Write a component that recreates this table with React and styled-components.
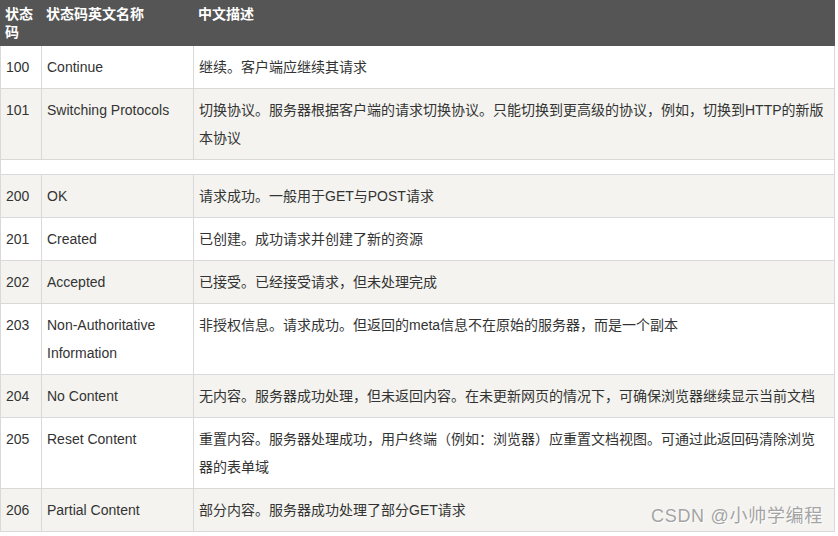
import React from "react";
import styled, { createGlobalStyle } from "styled-components";

const Global = createGlobalStyle`
  html, body { margin: 0; padding: 0; background: #fff; }
  body { font-family: "Liberation Sans", "Noto Sans CJK SC", sans-serif; }
`;

const Page = styled.div`
  position: relative;
  width: 834px;
`;

const Table = styled.table`
  width: 834px;
  table-layout: fixed;
  border-collapse: collapse;
  border-spacing: 0;
  font-family: "Liberation Sans", "Noto Sans CJK SC", sans-serif;
  font-size: 14px;
  color: #333;
`;

const Col = styled.col`
  width: ${(p) => p.$w}px;
`;

const HeadCell = styled.th`
  background: #555555;
  color: #fff;
  font-weight: bold;
  font-size: 14px;
  line-height: 18px;
  text-align: left;
  vertical-align: top;
  padding: 4px 4px 4px 4px;
  border: 1px solid #555555;
`;

const Row = styled.tr`
  background: #fff;
  &:nth-child(even) {
    background: #f4f3ef;
  }
`;

const Cell = styled.td`
  border: 1px solid #d9d9d9;
  padding: 7px ${(p) => (p.$wide ? 8 : 5)}px 7px 5px;
  line-height: 28px;
  vertical-align: top;
  word-wrap: break-word;
`;

const Spacer = styled.td`
  border: 1px solid #d9d9d9;
  padding: 7px 0;
  line-height: 0;
  height: 0;
`;

const Watermark = styled.div`
  position: absolute;
  right: 11px;
  top: 507px;
  font-family: "Liberation Sans", "Noto Sans CJK SC", sans-serif;
  font-size: 18px;
  line-height: 18px;
  letter-spacing: 0.7px;
  color: #a3a3a3;
  white-space: nowrap;
  text-shadow: 0 0 1px #fff, 1px 1px 0 rgba(255, 255, 255, 0.8);
`;

const groups = [
  [
    ["100", "Continue", "继续。客户端应继续其请求"],
    [
      "101",
      "Switching Protocols",
      "切换协议。服务器根据客户端的请求切换协议。只能切换到更高级的协议，例如，切换到HTTP的新版本协议",
    ],
  ],
  [
    ["200", "OK", "请求成功。一般用于GET与POST请求"],
    ["201", "Created", "已创建。成功请求并创建了新的资源"],
    ["202", "Accepted", "已接受。已经接受请求，但未处理完成"],
    [
      "203",
      "Non-Authoritative Information",
      "非授权信息。请求成功。但返回的meta信息不在原始的服务器，而是一个副本",
    ],
    [
      "204",
      "No Content",
      "无内容。服务器成功处理，但未返回内容。在未更新网页的情况下，可确保浏览器继续显示当前文档",
    ],
    [
      "205",
      "Reset Content",
      "重置内容。服务器处理成功，用户终端（例如：浏览器）应重置文档视图。可通过此返回码清除浏览器的表单域",
    ],
    ["206", "Partial Content", "部分内容。服务器成功处理了部分GET请求"],
  ],
];

export default function App() {
  return (
    <>
      <Global />
      <Page>
        <Table>
          <colgroup>
            <Col $w={41} />
            <Col $w={152} />
            <Col $w={641} />
          </colgroup>
          <thead>
            <tr>
              <HeadCell>状态码</HeadCell>
              <HeadCell>状态码英文名称</HeadCell>
              <HeadCell>中文描述</HeadCell>
            </tr>
          </thead>
          <tbody>
            {groups.map((g, gi) => (
              <React.Fragment key={gi}>
                {gi > 0 && (
                  <Row>
                    <Spacer colSpan={3} />
                  </Row>
                )}
                {g.map(([code, name, desc]) => (
                  <Row key={code}>
                    <Cell>{code}</Cell>
                    <Cell>{name}</Cell>
                    <Cell $wide>{desc}</Cell>
                  </Row>
                ))}
              </React.Fragment>
            ))}
          </tbody>
        </Table>
        <Watermark>CSDN @小帅学编程</Watermark>
      </Page>
    </>
  );
}
